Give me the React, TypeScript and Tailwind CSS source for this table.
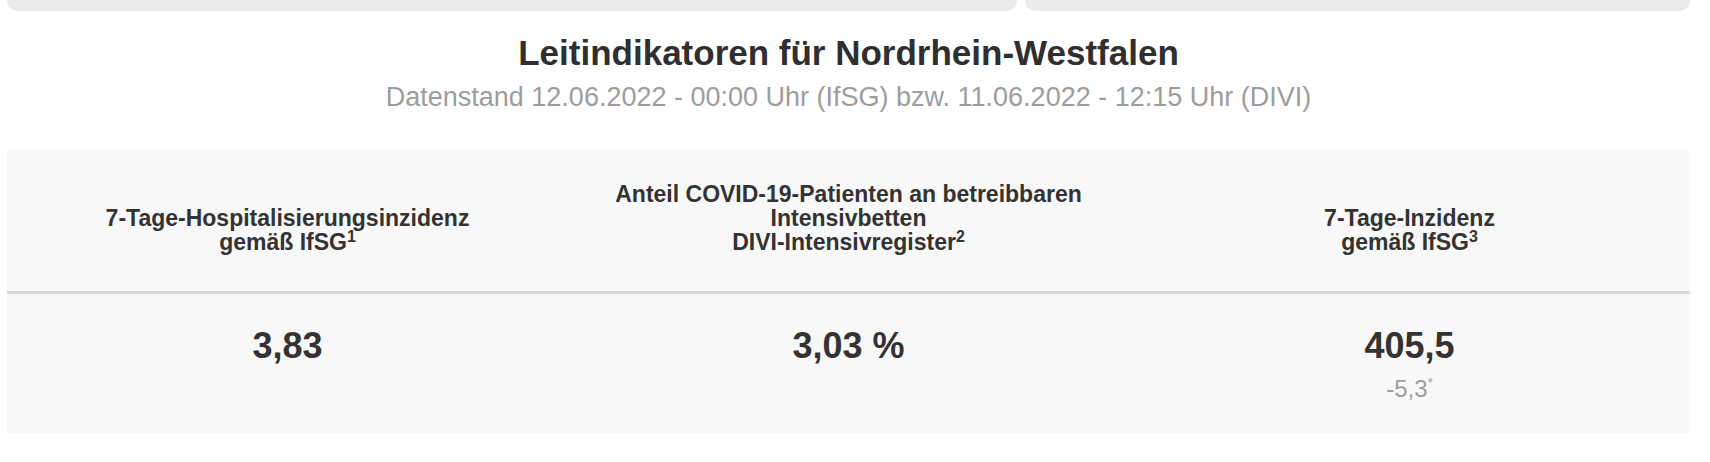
export default function App() {
  return (
    <div className="min-h-[462px] w-full bg-white pl-[7px] pr-[20px] text-[#333333] font-['Liberation_Sans',Arial,sans-serif]">
      {/* Cards cut off above */}
      <div className="flex gap-2">
        <div className="h-[11px] w-[1010px] rounded-b-[10px] bg-[#ebebeb]" />
        <div className="h-[11px] flex-1 rounded-b-[10px] bg-[#ebebeb]" />
      </div>

      {/* Heading */}
      <div className="mt-[21px] text-center">
        <h2 className="text-[35px] font-bold leading-[42px] text-[#2f2f2f]">
          Leitindikatoren für Nordrhein-Westfalen
        </h2>
        <p className="mt-[7px] text-[27px] leading-[32px] text-[#9d9d9d]">
          Datenstand 12.06.2022 - 00:00 Uhr (IfSG) bzw. 11.06.2022 - 12:15 Uhr (DIVI)
        </p>
      </div>

      {/* Indicator table */}
      <div className="mt-[37px] bg-[#f8f8f8]">
        <div className="grid grid-cols-3 border-b-[3px] border-[#d9d9d9]">
          <div className="flex flex-col justify-end pt-[32px] pb-[37px] text-center text-[23px] font-bold leading-[24px]">
            <span>7-Tage-Hospitalisierungsinzidenz</span>
            <span>
              gemäß IfSG<sup className="text-[16px]">1</sup>
            </span>
          </div>
          <div className="flex flex-col justify-end pt-[32px] pb-[37px] text-center text-[23px] font-bold leading-[24px]">
            <span>Anteil COVID-19-Patienten an betreibbaren</span>
            <span>Intensivbetten</span>
            <span>
              DIVI-Intensivregister<sup className="text-[16px]">2</sup>
            </span>
          </div>
          <div className="flex flex-col justify-end pt-[32px] pb-[37px] text-center text-[23px] font-bold leading-[24px]">
            <span>7-Tage-Inzidenz</span>
            <span>
              gemäß IfSG<sup className="text-[16px]">3</sup>
            </span>
          </div>
        </div>

        <div className="grid grid-cols-3 pt-[32px] pb-[30px] text-center">
          <div className="text-[36px] font-bold leading-[40px]">3,83</div>
          <div className="text-[36px] font-bold leading-[40px]">3,03 %</div>
          <div className="flex flex-col items-center">
            <span className="text-[36px] font-bold leading-[40px]">405,5</span>
            <span className="mt-[9px] text-[24px] leading-[28px] text-[#9d9d9d]">
              -5,3<sup className="-top-[0.8em] text-[13px]">*</sup>
            </span>
          </div>
        </div>
      </div>
    </div>
  );
}
